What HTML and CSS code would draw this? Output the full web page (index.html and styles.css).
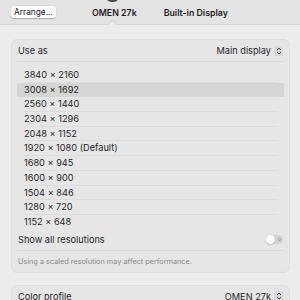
FILE: index.html
```html
<!DOCTYPE html>
<html lang="en">

<head>
    <meta charset="UTF-8">
    <title>Displays</title>
    <link rel="stylesheet" href="styles.css">
</head>

<body>
    <div class="topbar">
        <div class="topbar-cap"></div>
        <button class="arrange-btn">Arrange...</button>
        <div class="tabs">
            <span class="tab active">OMEN 27k</span>
            <span class="tab">Built-in Display</span>
        </div>
        <div class="notch"></div>
    </div>

    <div class="content">
        <div class="card">
            <div class="row head-row">
                <span>Use as</span>
                <span class="popup">Main display <span class="stepper"><svg width="6" height="8" viewBox="0 0 6 8"><path d="M1 3 L3 1 L5 3 M1 5 L3 7 L5 5" fill="none" stroke="#444" stroke-width="1"/></svg></span></span>
            </div>
            <ul class="res-list">
                <li>3840 × 2160</li>
                <li class="selected">3008 × 1692</li>
                <li>2560 × 1440</li>
                <li>2304 × 1296</li>
                <li>2048 × 1152</li>
                <li>1920 × 1080 (Default)</li>
                <li>1680 × 945</li>
                <li>1600 × 900</li>
                <li>1504 × 846</li>
                <li>1280 × 720</li>
                <li>1152 × 648</li>
            </ul>
            <div class="row toggle-row">
                <span>Show all resolutions</span>
                <span class="toggle"><span class="knob"></span><span class="off-mark"></span></span>
            </div>
            <div class="note">Using a scaled resolution may affect performance.</div>
        </div>

        <div class="card">
            <div class="row head-row">
                <span>Color profile</span>
                <span class="popup">OMEN 27k <span class="stepper"><svg width="6" height="8" viewBox="0 0 6 8"><path d="M1 3 L3 1 L5 3 M1 5 L3 7 L5 5" fill="none" stroke="#444" stroke-width="1"/></svg></span></span>
            </div>
        </div>
    </div>
</body>

</html>
```

FILE: styles.css
```css
body {
    margin: 0;
    padding: 0;
    background-color: #ececec;
    font-family: 'Inter', 'Liberation Sans', sans-serif;
    font-size: 9.2px;
    color: #262626;
    overflow: hidden;
}

.topbar {
    position: relative;
    height: 24px;
    display: flex;
    align-items: center;
    padding: 0 11px;
    background-color: #e3e3e3;
    border-bottom: 1px solid #d5d5d5;
}

.topbar-cap {
    position: absolute;
    left: 106px;
    top: -7px;
    width: 13px;
    height: 9px;
    border-radius: 50%;
    background-color: #4a4a4a;
}

.arrange-btn {
    font-family: inherit;
    font-size: 8.3px;
    color: #222;
    background-color: #fff;
    border: none;
    border-radius: 3px;
    margin: -1px 0 0;
    padding: 0;
    width: 45px;
    height: 12px;
    flex-shrink: 0;
    box-shadow: 0 0.5px 1px rgba(0, 0, 0, 0.25);
}

.tabs {
    display: flex;
    gap: 27px;
    margin-left: 36px;
}

.tab {
    font-weight: 600;
    font-size: 8.8px;
    color: #1f1f1f;
}

.notch {
    position: absolute;
    left: 109px;
    bottom: -4px;
    width: 6px;
    height: 6px;
    background-color: #ececec;
    border-left: 1px solid #d5d5d5;
    border-top: 1px solid #d5d5d5;
    transform: rotate(45deg);
}

.content {
    padding: 14px 10px 0 11px;
    display: flex;
    flex-direction: column;
    gap: 12px;
}

.card {
    background-color: #e6e6e6;
    border: 1px solid #dedede;
    border-radius: 6px;
    padding: 0 5px;
}

.row {
    display: flex;
    justify-content: space-between;
    align-items: center;
    padding: 0 1px;
}

.head-row {
    height: 21px;
    border-bottom: 1px solid #d9d9d9;
}

.popup {
    display: flex;
    align-items: center;
    gap: 3px;
}

.stepper {
    display: flex;
    align-items: center;
    justify-content: center;
    width: 9px;
    height: 10px;
    border-radius: 2px;
    background-color: #d8d8d8;
}

.res-list {
    list-style: none;
    margin: 0;
    padding: 6px 0 0;
}

.res-list li {
    height: 14.7px;
    line-height: 14.7px;
    padding-left: 7px;
    position: relative;
    box-sizing: border-box;
}

.res-list li::after {
    content: '';
    position: absolute;
    left: 6px;
    right: 6px;
    bottom: 0;
    border-bottom: 1px solid #dcdcdc;
}

.res-list li:last-child::after,
.res-list li.selected::after {
    display: none;
}

.res-list li.selected {
    background-color: #d5d5d5;
}

.toggle-row {
    height: 20px;
    border-bottom: 1px solid #d9d9d9;
}

.toggle {
    position: relative;
    display: flex;
    align-items: center;
    justify-content: flex-end;
    width: 17px;
    height: 9px;
    border-radius: 5px;
    background-color: #d2d2d2;
    padding-right: 2px;
    box-sizing: border-box;
}

.knob {
    position: absolute;
    left: 0;
    top: 0;
    width: 9px;
    height: 9px;
    border-radius: 50%;
    background-color: #fff;
    box-shadow: 0 0.5px 1px rgba(0, 0, 0, 0.3);
}

.off-mark {
    width: 3px;
    height: 3px;
    border-radius: 50%;
    border: 1px solid #999;
    box-sizing: border-box;
}

.note {
    height: 21px;
    line-height: 21px;
    padding-left: 1px;
    font-size: 7.3px;
    color: #8a8a8a;
}
```
